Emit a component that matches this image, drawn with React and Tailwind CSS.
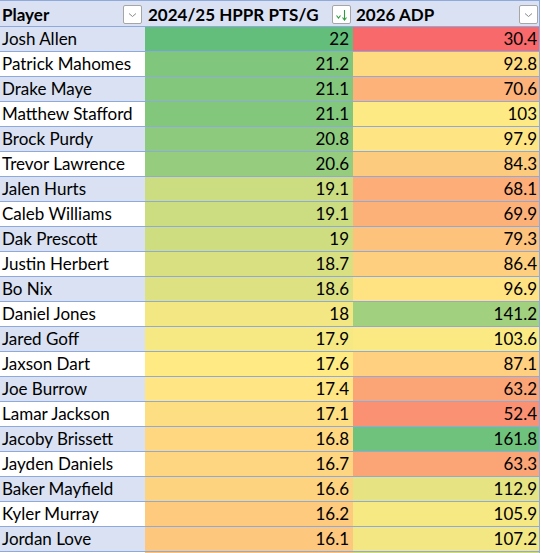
import React from "react";

const rows = [
  ["Josh Allen", 22, 30.4],
  ["Patrick Mahomes", 21.2, 92.8],
  ["Drake Maye", 21.1, 70.6],
  ["Matthew Stafford", 21.1, 103],
  ["Brock Purdy", 20.8, 97.9],
  ["Trevor Lawrence", 20.6, 84.3],
  ["Jalen Hurts", 19.1, 68.1],
  ["Caleb Williams", 19.1, 69.9],
  ["Dak Prescott", 19, 79.3],
  ["Justin Herbert", 18.7, 86.4],
  ["Bo Nix", 18.6, 96.9],
  ["Daniel Jones", 18, 141.2],
  ["Jared Goff", 17.9, 103.6],
  ["Jaxson Dart", 17.6, 87.1],
  ["Joe Burrow", 17.4, 63.2],
  ["Lamar Jackson", 17.1, 52.4],
  ["Jacoby Brissett", 16.8, 161.8],
  ["Jayden Daniels", 16.7, 63.3],
  ["Baker Mayfield", 16.6, 112.9],
  ["Kyler Murray", 16.2, 105.9],
  ["Jordan Love", 16.1, 107.2],
];

const RED = [248, 105, 107];
const YEL = [255, 235, 132];
const GRN = [99, 190, 123];

function mix(a, b, t) {
  const c = a.map((x, i) => Math.round(x + (b[i] - x) * t));
  return `rgb(${c[0]},${c[1]},${c[2]})`;
}

function scale(v, min, mid, max) {
  if (v >= mid) {
    const t = Math.min(1, (v - mid) / (max - mid));
    return mix(YEL, GRN, t);
  }
  const t = Math.min(1, (mid - v) / (mid - min));
  return mix(YEL, RED, t);
}

const c2 = (v) => scale(v, 12, 17.65, 22);
const c3 = (v) => scale(v, 30.4, 102, 167);

function FilterButton({ sorted }) {
  return (
    <span className="flex h-[19px] w-[19px] shrink-0 items-center justify-center rounded-[2px] border border-[#a6a6a6] bg-white">
      {sorted ? (
        <svg width="17" height="17" viewBox="0 0 17 17" fill="none">
          <path d="M3.5 9.5 L5.5 12 L7.5 9.5" stroke="#2f9a3e" strokeWidth="1.1" />
          <path d="M11.5 4 V13.5" stroke="#2f9a3e" strokeWidth="1.1" />
          <path d="M9.5 11.5 L11.5 14 L13.5 11.5" stroke="#2f9a3e" strokeWidth="1.1" />
        </svg>
      ) : (
        <svg width="17" height="17" viewBox="0 0 17 17" fill="none">
          <path d="M5 7.5 L8.5 10.5 L12 7.5" stroke="#8a8a8a" strokeWidth="1" />
        </svg>
      )}
    </span>
  );
}

export default function App() {
  return (
    <div className="w-[540px] border-r border-[#8ea9db] font-['Lato',sans-serif] text-[17px] text-black">
      <div className="flex h-[27px] border-y border-[#8ea9db] bg-[#d9e1f2] font-bold">
        <div className="flex w-[145px] items-end justify-between pb-[1px] pl-[2px] pr-[3px]">
          <span className="leading-[20px]">Player</span>
          <span className="pb-[1px]"><FilterButton /></span>
        </div>
        <div className="flex w-[208px] items-end justify-between pb-[1px] pl-[3px] pr-[2px]">
          <span className="leading-[20px]">2024/25 HPPR PTS/G</span>
          <span className="pb-[1px]"><FilterButton sorted /></span>
        </div>
        <div className="flex w-[186px] items-end justify-between pb-[1px] pl-[3px] pr-[1px]">
          <span className="leading-[20px]">2026 ADP</span>
          <span className="pb-[1px]"><FilterButton /></span>
        </div>
      </div>
      {rows.map(([name, pts, adp], i) => (
        <div key={name} className="flex h-[25px] border-b border-[#8ea9db]">
          <div
            className={`flex w-[145px] items-center pl-[2px] leading-[24px] ${
              i % 2 === 0 ? "bg-[#d9e1f2]" : "bg-white"
            }`}
          >
            {name}
          </div>
          <div
            className="flex w-[208px] items-center justify-end pr-[4px] leading-[24px]"
            style={{ backgroundColor: c2(pts) }}
          >
            {String(pts)}
          </div>
          <div
            className="flex w-[186px] items-center justify-end pr-[2px] leading-[24px]"
            style={{ backgroundColor: c3(adp) }}
          >
            {String(adp)}
          </div>
        </div>
      ))}
      <div className="flex h-[25px] border-b border-[#8ea9db]">
        <div className="w-[145px] bg-white" />
        <div className="w-[208px]" style={{ backgroundColor: c2(15.9) }} />
        <div className="w-[186px]" style={{ backgroundColor: c3(122) }} />
      </div>
    </div>
  );
}
